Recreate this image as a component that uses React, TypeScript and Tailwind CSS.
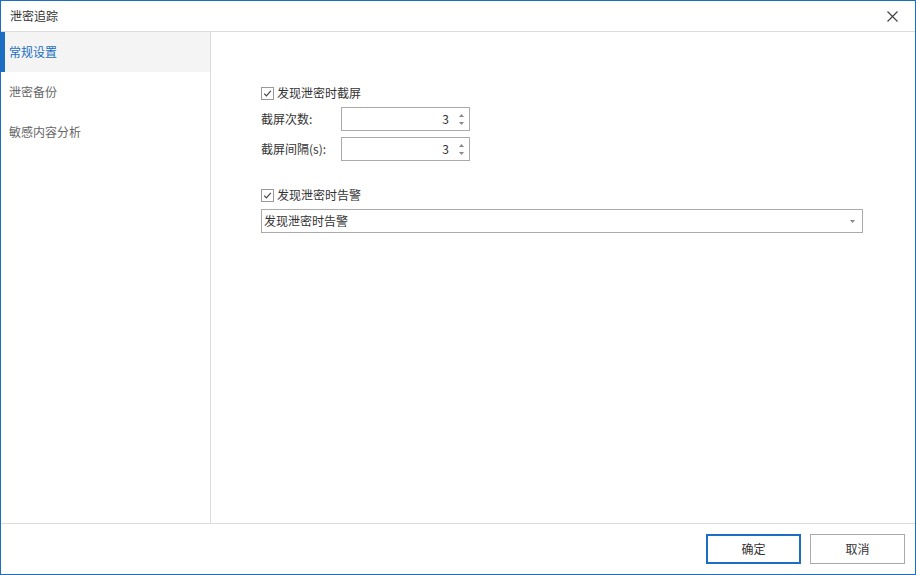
import React from "react";

const font = { fontFamily: '"Noto Sans CJK SC", "Noto Sans", sans-serif' };

const menu = ["常规设置", "泄密备份", "敏感内容分析"];

function Check({ label }: { label: string }) {
  return (
    <label className="flex h-[20px] items-center gap-[3px] text-[12px] text-[#333]">
      <span className="flex h-[13px] w-[13px] items-center justify-center border border-[#999] bg-white">
        <svg width="9" height="9" viewBox="0 0 9 9" fill="none">
          <path d="M1.2 4.6 L3.4 6.8 L7.8 1.8" stroke="#444" strokeWidth="1.2" />
        </svg>
      </span>
      {label}
    </label>
  );
}

function Spin({ label, value }: { label: string; value: number }) {
  return (
    <div className="flex h-[24px] items-center">
      <span className="w-[80px] text-[12px] text-[#333]">{label}</span>
      <div className="flex h-[24px] w-[129px] items-center border border-[#aaa] bg-white">
        <span className="flex-1 pr-[4px] text-right text-[12px] text-[#333]">{value}</span>
        <div className="flex w-[16px] flex-col items-center gap-[5px]">
          <svg width="5" height="3" viewBox="0 0 5 3">
            <path d="M0 3 L2.5 0 L5 3 Z" fill="#888" />
          </svg>
          <svg width="5" height="3" viewBox="0 0 5 3">
            <path d="M0 0 L2.5 3 L5 0 Z" fill="#888" />
          </svg>
        </div>
      </div>
    </div>
  );
}

export default function App() {
  return (
    <div style={font} className="flex h-[575px] w-[916px] flex-col border border-[#1b6ec2] bg-white">
      <div className="flex h-[31px] shrink-0 items-center justify-between border-b border-[#dcdcdc] pl-[9px] pr-[17px]">
        <span className="text-[12px] text-[#333]">泄密追踪</span>
        <svg width="11" height="11" viewBox="0 0 11 11">
          <path d="M0.5 0.5 L10.5 10.5 M10.5 0.5 L0.5 10.5" stroke="#444" strokeWidth="1.2" />
        </svg>
      </div>

      <div className="flex flex-1">
        <div className="w-[210px] shrink-0 border-r border-[#dcdcdc]">
          {menu.map((m, i) => (
            <div
              key={m}
              className={`flex h-[40px] items-center border-l-4 pl-[4px] text-[12px] ${
                i === 0 ? "border-[#1b6ec2] bg-[#f4f4f4] text-[#1b6ec2]" : "border-transparent text-[#666]"
              }`}
            >
              {m}
            </div>
          ))}
        </div>

        <div className="flex flex-1 flex-col pl-[50px] pr-[52px] pt-[51px]">
          <Check label="发现泄密时截屏" />
          <div className="mt-[4px] flex flex-col gap-[6px]">
            <Spin label="截屏次数:" value={3} />
            <Spin label="截屏间隔(s):" value={3} />
          </div>
          <div className="mt-[24px]">
            <Check label="发现泄密时告警" />
          </div>
          <div className="mt-[4px] flex h-[24px] items-center justify-between border border-[#aaa] bg-white pl-[2px] pr-[7px]">
            <span className="text-[12px] text-[#333]">发现泄密时告警</span>
            <svg width="5" height="3" viewBox="0 0 5 3">
              <path d="M0 0 L2.5 3 L5 0 Z" fill="#888" />
            </svg>
          </div>
        </div>
      </div>

      <div className="flex h-[51px] shrink-0 items-center justify-end gap-[9px] border-t border-[#dcdcdc] pr-[10px]">
        <button className="h-[30px] w-[95px] border-2 border-[#1b6ec2] bg-white text-[12px] text-[#333]">确定</button>
        <button className="h-[30px] w-[95px] border border-[#aaa] bg-white text-[12px] text-[#333]">取消</button>
      </div>
    </div>
  );
}
